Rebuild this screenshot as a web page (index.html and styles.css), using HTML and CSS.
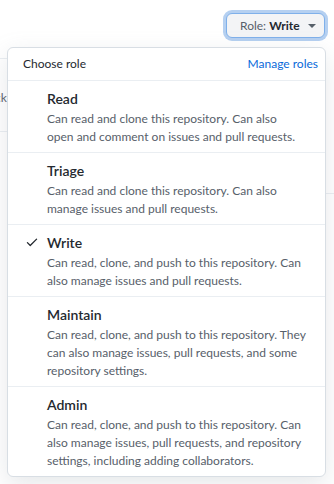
FILE: index.html
```html
<!DOCTYPE html>
<html lang="en">
<head>
<meta charset="utf-8">
<title>Choose role</title>
<link rel="stylesheet" href="styles.css">
</head>
<body>
<div class="page">
  <div class="bg">
    <div class="bg-left"><span class="bg-text">Pick</span></div>
    <div class="bg-right"></div>
  </div>
  <div class="topbar">
    <button class="role-btn" type="button">
      <span class="role-label">Role: </span><span class="role-value">Write</span>
      <span class="caret"></span>
    </button>
  </div>
  <div class="menu">
    <div class="menu-header">
      <span class="menu-title">Choose role</span>
      <a class="menu-link" href="#">Manage roles</a>
    </div>
    <div class="menu-item">
      <div class="item-title">Read</div>
      <div class="item-desc">Can read and clone this repository. Can also<br>open and comment on issues and pull requests.</div>
    </div>
    <div class="menu-item">
      <div class="item-title">Triage</div>
      <div class="item-desc">Can read and clone this repository. Can also manage issues and pull requests.</div>
    </div>
    <div class="menu-item selected">
      <svg class="check" viewBox="0 0 16 16" width="16" height="16" aria-hidden="true"><path d="M13.78 4.22a.75.75 0 0 1 0 1.06l-7.25 7.25a.75.75 0 0 1-1.06 0L2.22 9.28a.75.75 0 0 1 1.06-1.06L6 10.94l6.72-6.72a.75.75 0 0 1 1.06 0Z"/></svg>
      <div class="item-title">Write</div>
      <div class="item-desc">Can read, clone, and push to this repository. Can also manage issues and pull requests.</div>
    </div>
    <div class="menu-item">
      <div class="item-title">Maintain</div>
      <div class="item-desc">Can read, clone, and push to this repository. They can also manage issues, pull requests, and some repository settings.</div>
    </div>
    <div class="menu-item">
      <div class="item-title">Admin</div>
      <div class="item-desc">Can read, clone, and push to this repository. Can also manage issues, pull requests, and repository settings, including adding collaborators.</div>
    </div>
  </div>
</div>
</body>
</html>
```
FILE: styles.css
```css
* { box-sizing: border-box; }
html, body { margin: 0; padding: 0; }
body {
  width: 334px;
  height: 484px;
  overflow: hidden;
  background: #ffffff;
  font-family: "Lato", "Noto Sans", sans-serif;
  color: #24292f;
}
.page {
  position: relative;
  width: 334px;
  height: 484px;
}
.bg {
  position: absolute;
  left: 0;
  top: 58px;
  width: 334px;
  display: grid;
  grid-template-columns: 167px 167px;
  align-items: start;
}
.bg-left {
  height: 74px;
  border-top: 1px solid #eaeef2;
  border-bottom: 1px solid #eaeef2;
  overflow: hidden;
  padding-top: 31px;
}
.bg-text {
  display: block;
  margin-left: -15px;
  font-size: 12px;
  color: #57606a;
  line-height: 16px;
}
.bg-right {
  height: 136px;
  border-bottom: 1px solid #eaeef2;
}
.topbar {
  position: relative;
  display: flex;
  justify-content: flex-end;
  padding: 13px 9px 0 0;
}
.role-btn {
  display: flex;
  align-items: center;
  height: 25px;
  width: 99px;
  padding: 0 10px 0 13px;
  background: #f3f4f6;
  border: 1px solid #7fb0ea;
  border-radius: 6px;
  box-shadow: 0 0 0 3px #b5d0f1;
  font-family: inherit;
  font-size: 12px;
  color: #57606a;
  cursor: pointer;
}
.role-label { white-space: pre; }
.role-value { color: #24292f; font-weight: 700; }
.caret {
  margin-left: 8px;
  width: 0;
  height: 0;
  border-left: 4px solid transparent;
  border-right: 4px solid transparent;
  border-top: 4px solid #57606a;
}
.menu {
  position: absolute;
  left: 7px;
  top: 47px;
  width: 319px;
  background: #ffffff;
  border: 1px solid #d8dee4;
  border-radius: 6px;
  box-shadow: 0 8px 24px rgba(140, 149, 159, 0.22);
  overflow: hidden;
}
.menu-header {
  display: flex;
  justify-content: space-between;
  align-items: center;
  height: 32px;
  padding: 0 7px 0 15px;
  font-size: 12px;
  line-height: 16px;
}
.menu-title { color: #24292f; }
.menu-link { color: #0969da; text-decoration: none; }
.menu-item {
  position: relative;
  border-top: 1px solid #eaeef2;
  padding: 7px 10px 6px 39px;
}
.item-title {
  font-size: 14px;
  line-height: 22px;
  font-weight: 600;
  color: #24292f;
}
.item-desc {
  font-size: 12px;
  line-height: 18px;
  color: #57606a;
}
.check {
  position: absolute;
  left: 17px;
  top: 10px;
  width: 14px;
  height: 14px;
  fill: #24292f;
}
```
